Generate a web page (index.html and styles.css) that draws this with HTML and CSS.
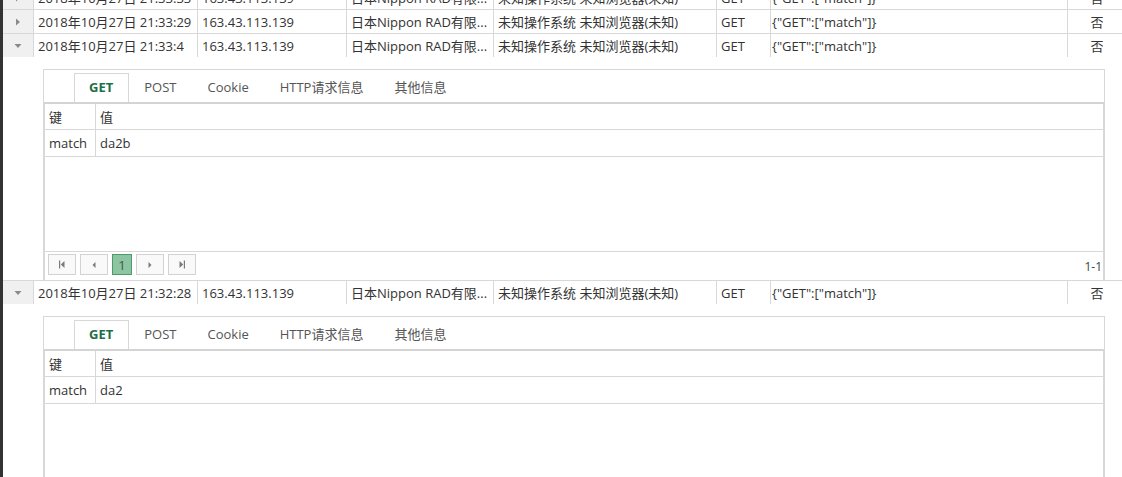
FILE: index.html
```html
<!DOCTYPE html>
<html lang="zh-CN">
<head>
<meta charset="utf-8">
<title>访问记录</title>
<link rel="stylesheet" href="styles.css">
</head>
<body>
<div class="page">
  <div class="row">
    <div class="cell exp"><svg width="8" height="8" viewBox="0 0 8 8"><path d="M2 0.5 L6 4 L2 7.5 Z" fill="#8a8a8a"/></svg></div>
    <div class="cell">2018年10月27日 21:33:33</div>
    <div class="cell">163.43.113.139</div>
    <div class="cell">日本Nippon RAD有限...</div>
    <div class="cell">未知操作系统 未知浏览器(未知)</div>
    <div class="cell">GET</div>
    <div class="cell tight">{"GET":["match"]}</div>
    <div class="cell center">否</div>
  </div>
  <div class="row">
    <div class="cell exp"><svg width="8" height="8" viewBox="0 0 8 8"><path d="M2 0.5 L6 4 L2 7.5 Z" fill="#8a8a8a"/></svg></div>
    <div class="cell">2018年10月27日 21:33:29</div>
    <div class="cell">163.43.113.139</div>
    <div class="cell">日本Nippon RAD有限...</div>
    <div class="cell">未知操作系统 未知浏览器(未知)</div>
    <div class="cell">GET</div>
    <div class="cell tight">{"GET":["match"]}</div>
    <div class="cell center">否</div>
  </div>
  <div class="row">
    <div class="cell exp"><svg width="8" height="8" viewBox="0 0 8 8"><path d="M0.5 2 L7.5 2 L4 6 Z" fill="#8a8a8a"/></svg></div>
    <div class="cell">2018年10月27日 21:33:4</div>
    <div class="cell">163.43.113.139</div>
    <div class="cell">日本Nippon RAD有限...</div>
    <div class="cell">未知操作系统 未知浏览器(未知)</div>
    <div class="cell">GET</div>
    <div class="cell tight">{"GET":["match"]}</div>
    <div class="cell center">否</div>
  </div>
  <div class="detail">
    <div class="panel">
      <div class="tabs">
        <div class="tab active">GET</div>
        <div class="tab">POST</div>
        <div class="tab">Cookie</div>
        <div class="tab">HTTP请求信息</div>
        <div class="tab">其他信息</div>
      </div>
      <div class="kv">
        <div class="kv-row head"><div class="k">键</div><div class="v">值</div></div>
        <div class="kv-row"><div class="k">match</div><div class="v">da2b</div></div>
        <div class="kv-empty"></div>
        <div class="pager">
          <button class="pbtn"><svg width="8" height="9" viewBox="0 0 8 9"><rect x="1" y="0.5" width="1.2" height="8" fill="#7a7a7a"/><path d="M6.5 1 L2.8 4.5 L6.5 8 Z" fill="#7a7a7a"/></svg></button>
          <button class="pbtn"><svg width="6" height="8" viewBox="0 0 6 8"><path d="M4.5 1 L1.5 4 L4.5 7 Z" fill="#7a7a7a"/></svg></button>
          <button class="pbtn cur">1</button>
          <button class="pbtn"><svg width="6" height="8" viewBox="0 0 6 8"><path d="M1.5 1 L4.5 4 L1.5 7 Z" fill="#7a7a7a"/></svg></button>
          <button class="pbtn"><svg width="8" height="9" viewBox="0 0 8 9"><path d="M1.5 1 L5.2 4.5 L1.5 8 Z" fill="#7a7a7a"/><rect x="5.8" y="0.5" width="1.2" height="8" fill="#7a7a7a"/></svg></button>
          <span class="pinfo">1-1</span>
        </div>
      </div>
    </div>
  </div>
  <div class="row">
    <div class="cell exp"><svg width="8" height="8" viewBox="0 0 8 8"><path d="M0.5 2 L7.5 2 L4 6 Z" fill="#8a8a8a"/></svg></div>
    <div class="cell">2018年10月27日 21:32:28</div>
    <div class="cell">163.43.113.139</div>
    <div class="cell">日本Nippon RAD有限...</div>
    <div class="cell">未知操作系统 未知浏览器(未知)</div>
    <div class="cell">GET</div>
    <div class="cell tight">{"GET":["match"]}</div>
    <div class="cell center">否</div>
  </div>
  <div class="detail">
    <div class="panel">
      <div class="tabs">
        <div class="tab active">GET</div>
        <div class="tab">POST</div>
        <div class="tab">Cookie</div>
        <div class="tab">HTTP请求信息</div>
        <div class="tab">其他信息</div>
      </div>
      <div class="kv">
        <div class="kv-row head"><div class="k">键</div><div class="v">值</div></div>
        <div class="kv-row"><div class="k">match</div><div class="v">da2</div></div>
        <div class="kv-empty tall"></div>
      </div>
    </div>
  </div>
</div>
</body>
</html>
```

FILE: styles.css
```css
html, body {
  margin: 0;
  padding: 0;
  overflow: hidden;
  background: #ffffff;
}

body {
  font-family: "Open Sans", "Noto Sans CJK SC", sans-serif;
  font-size: 13px;
  color: #333333;
}

.page {
  border-left: 3px solid #333333;
  min-height: 100vh;
  margin-top: -15px;
}

.row {
  display: grid;
  grid-template-columns: 31px 164px 149px 147px 223px 54px 297px 1fr;
  height: 24px;
  box-sizing: border-box;
  border-top: 1px solid #d8d8d8;
}

.cell {
  display: flex;
  align-items: center;
  padding: 0 4px;
  box-sizing: border-box;
  border-right: 1px solid #d8d8d8;
  white-space: nowrap;
  overflow: hidden;
}

.cell:last-child {
  border-right: none;
}

.cell.exp {
  background: #f0f0f0;
  justify-content: center;
  padding: 0;
}

.cell.tight {
  padding-left: 1px;
}

.cell.center {
  justify-content: center;
  padding: 0 0 0 4px;
}

.detail {
  padding: 12px 17px 0 40px;
}

.panel {
  border: 1px solid #d8d8d8;
  border-bottom: none;
}

.tabs {
  display: flex;
  align-items: flex-end;
  height: 32px;
  padding-left: 30px;
  border-bottom: 2px solid #d4d4d4;
}

.tab {
  height: 29px;
  line-height: 27px;
  padding: 0 15px 0 14px;
  box-sizing: border-box;
  border: 1px solid transparent;
  border-bottom: none;
  color: #555555;
  white-space: nowrap;
}

.tab.active {
  border-color: #d8d8d8;
  background: #ffffff;
  color: #1d6e45;
  font-weight: bold;
}

.kv {
  border-left: 1px solid #d8d8d8;
  border-right: 1px solid #d8d8d8;
}

.kv-row {
  display: grid;
  grid-template-columns: 51px 1fr;
  height: 26px;
  box-sizing: border-box;
  border-bottom: 1px solid #d8d8d8;
}

.kv-row + .kv-row {
  height: 27px;
}

.kv-row .k,
.kv-row .v {
  display: flex;
  align-items: center;
  padding: 0 4px;
  box-sizing: border-box;
}

.kv-row .k {
  border-right: 1px solid #d8d8d8;
}

.kv-empty {
  height: 94px;
}

.kv-empty.tall {
  height: 120px;
}

.pager {
  display: flex;
  align-items: flex-start;
  gap: 4px;
  height: 29px;
  box-sizing: border-box;
  padding: 2px 0 0 3px;
  border-top: 1px solid #d8d8d8;
}

.pbtn {
  width: 28px;
  height: 21px;
  margin: 0;
  padding: 0;
  border: 1px solid #d2d2d2;
  background: #f9f9f9;
  display: flex;
  align-items: center;
  justify-content: center;
  font-family: "Open Sans", sans-serif;
  font-size: 13px;
  color: #444444;
}

.pbtn.cur {
  width: 20px;
  background: #8dc4a1;
  border-color: #4f9a6c;
  color: #3d5a48;
}

.pinfo {
  margin-left: auto;
  align-self: center;
  font-size: 12px;
  color: #444444;
  padding-right: 1px;
  margin-top: -1px;
}
```
